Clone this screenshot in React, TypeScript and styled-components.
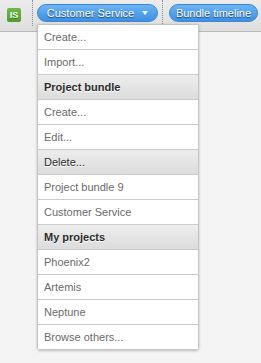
import styled, {createGlobalStyle} from 'styled-components';

const GlobalStyle = createGlobalStyle`
    html, body {
        margin: 0;
        height: 100%;
        background: #f4f4f4;
        font-family: 'Liberation Sans', Arial, sans-serif;
    }
`

const Page = styled.div`
    position: relative;
    min-height: 363px;
`

const TopBar = styled.header`
    position: relative;
    display: flex;
    align-items: flex-start;
    height: 31px;
    padding-left: 7px;
    background: linear-gradient(180deg, #ececec, #dedede);
    border-bottom: 1px solid #b9b9b9;
    box-sizing: content-box;
`

const Badge = styled.div`
    width: 14px;
    height: 14px;
    margin-top: 8px;
    border-radius: 2px;
    background: linear-gradient(180deg, #6cbb45, #4f9d2c);
    color: #fff;
    font-size: 9px;
    font-weight: bold;
    line-height: 14px;
    text-align: center;
    text-shadow: 0 1px 0 rgba(0, 0, 0, 0.35);
`

const Separator = styled.div<{$before: number, $after: number}>`
    width: 0;
    height: 26px;
    border-left: 1px dotted #8a8a8a;
    margin: 0 ${({$after}) => $after}px 0 ${({$before}) => $before}px;
`

const MenuWrap = styled.div`
    position: relative;
    margin-top: 4px;
`

const PillButton = styled.div<{$width: number}>`
    position: relative;
    z-index: 11;
    display: flex;
    align-items: center;
    justify-content: center;
    gap: 8px;
    width: ${({$width}) => $width}px;
    height: 18px;
    box-sizing: border-box;
    border-radius: 9px;
    border: 1px solid #3f86d2;
    background: linear-gradient(180deg, #6bb4f6, #3d90e4);
    color: #fff;
    font-size: 11px;
    text-shadow: 0 1px 1px rgba(0, 0, 0, 0.6);
    white-space: nowrap;
`

const Caret = styled.span`
    width: 0;
    height: 0;
    border-left: 3px solid transparent;
    border-right: 3px solid transparent;
    border-top: 4px solid #fff;
`

const Menu = styled.ul`
    position: absolute;
    z-index: 10;
    top: 20px;
    left: 0;
    width: 162px;
    margin: 0;
    padding: 0;
    list-style: none;
    box-sizing: border-box;
    background: #fff;
    border: 1px solid #c4c4c4;
    border-radius: 0 0 3px 3px;
    box-shadow: 0 1px 3px rgba(0, 0, 0, 0.22);
`

const Item = styled.li<{$kind?: 'header' | 'active'}>`
    display: block;
    height: 24px;
    padding-left: 6px;
    line-height: 24px;
    font-size: 11px;
    border-top: 1px solid #cbcbcb;
    color: ${({$kind}) => ($kind ? '#2a2a2a' : '#6a6a6a')};
    font-weight: ${({$kind}) => ($kind === 'header' ? 'bold' : 'normal')};
    background: ${({$kind}) => $kind ? 'linear-gradient(180deg, #ededed, #dcdcdc)' : '#fff'};
    text-shadow: ${({$kind}) => ($kind ? '0 1px 0 #fff' : 'none')};

    &:first-child {
        border-top: none;
    }
`

const items: {label: string, kind?: 'header' | 'active'}[] = [
    {label: 'Create...'},
    {label: 'Import...'},
    {label: 'Project bundle', kind: 'header'},
    {label: 'Create...'},
    {label: 'Edit...'},
    {label: 'Delete...', kind: 'active'},
    {label: 'Project bundle 9'},
    {label: 'Customer Service'},
    {label: 'My projects', kind: 'header'},
    {label: 'Phoenix2'},
    {label: 'Artemis'},
    {label: 'Neptune'},
    {label: 'Browse others...'},
]

export default function App() {
    return (
        <Page>
            <GlobalStyle/>
            <TopBar>
                <Badge>IS</Badge>
                <Separator $before={11} $after={4}/>
                <MenuWrap>
                    <PillButton $width={121}>
                        Customer Service
                        <Caret/>
                    </PillButton>
                    <Menu>
                        {items.map((item, i) => (
                            <Item key={i} $kind={item.kind}>{item.label}</Item>
                        ))}
                    </Menu>
                </MenuWrap>
                <Separator $before={4} $after={6}/>
                <MenuWrap>
                    <PillButton $width={89}>Bundle timeline</PillButton>
                </MenuWrap>
            </TopBar>
        </Page>
    )
}
